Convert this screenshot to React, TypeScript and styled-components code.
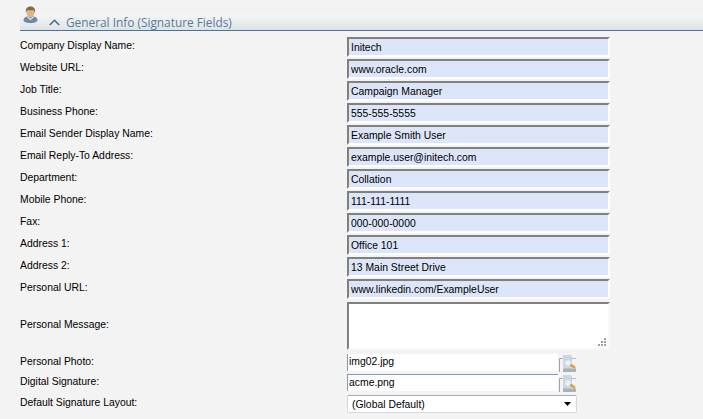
import React from 'react';
import styled, { createGlobalStyle } from 'styled-components';

const textFields = [
  ['Company Display Name:', 'Initech'],
  ['Website URL:', 'www.oracle.com'],
  ['Job Title:', 'Campaign Manager'],
  ['Business Phone:', '555-555-5555'],
  ['Email Sender Display Name:', 'Example Smith User'],
  ['Email Reply-To Address:', 'example.user@initech.com'],
  ['Department:', 'Collation'],
  ['Mobile Phone:', '111-111-1111'],
  ['Fax:', '000-000-0000'],
  ['Address 1:', 'Office 101'],
  ['Address 2:', '13 Main Street Drive'],
  ['Personal URL:', 'www.linkedin.com/ExampleUser'],
];

const UserIcon = () => (
  <svg width="15" height="18" viewBox="0 0 15 18">
    <path d="M.500 14.500C.500 11.500 3 10 7.500 10s7 1.500 7 4.500c-1 3.500-13 3.500-14 0z" fill="#6f8ca6" />
    <path d="M4.800 10l2.700 2.800L10.200 10l.6 1.200-3.300 3-3.300-3z" fill="#e4eaee" />
    <ellipse cx="7.500" cy="6.500" rx="4" ry="4.800" fill="#dcb58f" />
    <path d="M3 7C2 2 5 .500 7.500 .500S13 2 12 7c-.4-1.600-1-2.600-2-3-2 .6-3.500.6-5 .1C4 4.500 3.300 5.500 3 7z" fill="#8a6a3a" />
  </svg>
);

const BrowseIcon = () => (
  <svg width="18" height="18" viewBox="0 0 18 18">
    <path d="M3.500 3.500H.500V17" fill="none" stroke="#98a4bc" strokeWidth="1" />
    <path d="M4 0h8l1 2v12H4z" fill="#ccd6de" />
    <path d="M12 3h5v1h-5z" fill="#b4bfc8" />
    <path d="M4 13.500h13V17H4z" fill="#a6b2bc" />
    <circle cx="9" cy="8" r="2.800" fill="#e2f2f8" />
    <path d="M11.500 9.500L16 13" stroke="#ec9a30" strokeWidth="2.400" />
  </svg>
);

const App: React.FC = () => {
  return (
    <Page>
      <GlobalStyle />
      <SectionHeader>
        <HeaderIcon>
          <UserIcon />
        </HeaderIcon>
        <Chevron width="11" height="7" viewBox="0 0 11 7">
          <path d="M.800 6L5.500 1.300L10.200 6" fill="none" stroke="#3f6f98" strokeWidth="1.600" />
        </Chevron>
        <SectionTitle>General Info (Signature Fields)</SectionTitle>
      </SectionHeader>

      <Form>
        {textFields.map(([label, value]) => (
          <Row key={label}>
            <Label>{label}</Label>
            <TextInput type="text" defaultValue={value} />
          </Row>
        ))}

        <MessageRow>
          <Label>Personal Message:</Label>
          <MessageBox defaultValue="" />
        </MessageRow>

        <FileRow>
          <FileLabel>Personal Photo:</FileLabel>
          <FileInput type="text" defaultValue="img02.jpg" />
          <BrowseButton>
            <BrowseIcon />
          </BrowseButton>
        </FileRow>
        <FileRow $last>
          <FileLabel>Digital Signature:</FileLabel>
          <FileInput type="text" defaultValue="acme.png" $outlined />
          <BrowseButton>
            <BrowseIcon />
          </BrowseButton>
        </FileRow>

        <SelectRow>
          <Label>Default Signature Layout:</Label>
          <SelectBox defaultValue="global">
            <option value="global">(Global Default)</option>
          </SelectBox>
        </SelectRow>
      </Form>
    </Page>
  );
};

const GlobalStyle = createGlobalStyle`
  html, body {
    margin: 0;
    padding: 0;
    background: #f3f3f3;
    overflow: hidden;
  }
`;

const Page = styled.div`
  width: 703px;
  height: 419px;
  overflow: hidden;
  padding-top: 14px;
  box-sizing: border-box;
  background: #f3f3f3;
  font-family: 'Liberation Sans', Arial, sans-serif;
  font-size: 10.4px;
  color: #000;
`;

const SectionHeader = styled.div`
  position: relative;
  display: flex;
  align-items: center;
  height: 16px;
  margin-left: 20px;
  padding-left: 29px;
  background: linear-gradient(to bottom, #f5f6f6, #dfe3e6);
  border-bottom: 1px solid #4c7396;
`;

const HeaderIcon = styled.div`
  position: absolute;
  left: 3px;
  top: -8px;
  line-height: 0;
`;

const Chevron = styled.svg`
  display: block;
  flex: none;
  margin-right: 6px;
`;

const SectionTitle = styled.span`
  font-family: 'Open Sans', sans-serif;
  font-size: 11.85px;
  color: #5b7a9b;
  white-space: nowrap;
`;

const Form = styled.div`
  display: flex;
  flex-direction: column;
  padding-top: 6px;
`;

const Row = styled.div`
  display: flex;
  align-items: center;
  height: 20px;
  margin-bottom: 2px;
`;

const MessageRow = styled(Row)`
  height: 48px;
  margin-top: 1px;
  margin-bottom: 4px;
`;

const FileRow = styled(Row)<{ $last?: boolean }>`
  height: 17px;
  margin-bottom: ${(p) => (p.$last ? '4px' : '3px')};
`;

const SelectRow = styled(Row)`
  height: 18px;
`;

const Label = styled.div`
  flex: none;
  width: 347px;
  padding: 0 0 4px 20px;
  box-sizing: border-box;
  white-space: nowrap;
`;

const FileLabel = styled(Label)`
  padding-bottom: 2px;
`;

const TextInput = styled.input`
  width: 263px;
  height: 20px;
  box-sizing: border-box;
  margin: 0;
  padding: 0 0 0 2px;
  background: #dce6f8;
  border-style: solid;
  border-width: 2px;
  border-color: #808080 #fff #fff #808080;
  border-radius: 0;
  outline: none;
  font-family: 'Liberation Sans', Arial, sans-serif;
  font-size: 10.4px;
  color: #000;
`;

const MessageBox = styled.textarea`
  display: block;
  width: 263px;
  height: 48px;
  box-sizing: border-box;
  margin: 0;
  padding: 1px;
  resize: none;
  background: #fff url("data:image/svg+xml,%3Csvg xmlns='http://www.w3.org/2000/svg' width='8' height='8' fill='%23a0a0a0'%3E%3Cpath d='M6 0h2v2H6zM3 3h2v2H3zM6 3h2v2H6zM0 6h2v2H0zM3 6h2v2H3zM6 6h2v2H6z'/%3E%3C/svg%3E") no-repeat right 2px bottom 2px;
  border-style: solid;
  border-width: 2px;
  border-color: #808080 #f8f8f8 #f8f8f8 #808080;
  border-radius: 0;
  outline: none;
`;

const FileInput = styled.input<{ $outlined?: boolean }>`
  width: 211px;
  height: 17px;
  box-sizing: border-box;
  margin: 0;
  padding: 0 0 2px 1px;
  background: #fff;
  border: 0 solid #7f9db9;
  border-left-width: 1px;
  border-top-width: ${(p) => (p.$outlined ? '1px' : '0')};
  border-radius: 0;
  outline: none;
  font-family: 'Liberation Sans', Arial, sans-serif;
  font-size: 10.4px;
  color: #000;
`;

const BrowseButton = styled.div`
  flex: none;
  align-self: flex-start;
  line-height: 0;
  margin: 1px 0 0 1px;
`;

const SelectBox = styled.select`
  width: 230px;
  height: 18px;
  box-sizing: border-box;
  margin: 0;
  padding: 0 0 0 4px;
  appearance: none;
  background: #fff url("data:image/svg+xml,%3Csvg xmlns='http://www.w3.org/2000/svg' width='7' height='4'%3E%3Cpath d='M0 0h7L3.500 4z'/%3E%3C/svg%3E") no-repeat right 5px center;
  border: 1px solid #d4dae0;
  border-top-color: #a5abb3;
  border-radius: 2px;
  outline: none;
  font-family: 'Liberation Sans', Arial, sans-serif;
  font-size: 10.4px;
  color: #000;
`;

export default App;
